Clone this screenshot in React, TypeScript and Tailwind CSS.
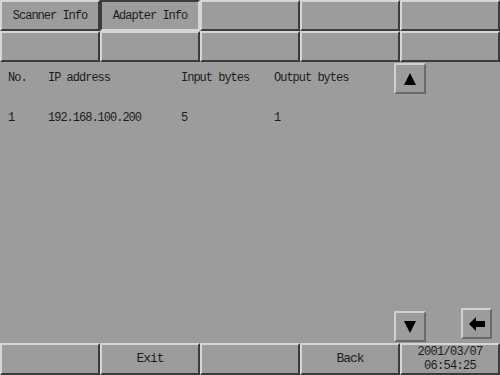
import React from 'react';

const mono = { fontFamily: '"Liberation Mono", "DejaVu Sans Mono", monospace' };

// raised panel: light top/left, dark bottom/right
const raised = 'border-2 border-t-[#d6d6d6] border-l-[#d6d6d6] border-r-[#3c3c3c] border-b-[#3c3c3c]';
// pressed panel (selected tab)
const pressed = 'border-2 border-t-[#3c3c3c] border-l-[#3c3c3c] border-r-[#d6d6d6] border-b-[#d6d6d6]';
const btn = 'border-2 border-t-[#d0d0d0] border-l-[#d0d0d0] border-r-[#6a6a6a] border-b-[#6a6a6a]';

function Cell({ label, selected }: { label?: string; selected?: boolean }) {
  return (
    <div
      className={`flex h-[31px] items-center justify-center text-[12px] tracking-[-1px] text-[#1c1c1c] ${
        selected ? pressed : raised
      }`}
    >
      {label}
    </div>
  );
}

function UpIcon() {
  return (
    <svg width="12" height="12" viewBox="0 0 12 12">
      <path d="M6 0 L12 12 L0 12 Z" fill="#000" />
    </svg>
  );
}

function DownIcon() {
  return (
    <svg width="12" height="12" viewBox="0 0 12 12">
      <path d="M0 0 L12 0 L6 12 Z" fill="#000" />
    </svg>
  );
}

function BackIcon() {
  return (
    <svg width="16" height="14" viewBox="0 0 16 14">
      <path d="M0 7 L7 0 L7 4 L16 4 L16 10 L7 10 L7 14 Z" fill="#000" />
    </svg>
  );
}

export default function App() {
  const headers = ['No.', 'IP address', 'Input bytes', 'Output bytes'];
  const rows = [['1', '192.168.100.200', '5', '1']];

  return (
    <div className="flex h-[375px] w-[500px] flex-col overflow-hidden bg-[#9c9c9c] text-[#1c1c1c]" style={mono}>
      {/* top tab rows */}
      <div className="grid grid-cols-5">
        <Cell label="Scanner Info" />
        <Cell label="Adapter Info" selected />
        <Cell />
        <Cell />
        <Cell />
        <Cell />
        <Cell />
        <Cell />
        <Cell />
        <Cell />
      </div>

      {/* content */}
      <div className="flex flex-1 flex-col">
        <div className="flex pt-px">
          <div className="flex-1 pl-[8px] pt-[7px] text-[12px] tracking-[-1px]">
            <div className="grid grid-cols-[40px_133px_93px_1fr]">
              {headers.map((h) => (
                <div key={h} className="h-[16px] leading-[16px]">
                  {h}
                </div>
              ))}
            </div>
            {rows.map((r, i) => (
              <div key={i} className="mt-[24px] grid grid-cols-[40px_133px_93px_1fr]">
                {r.map((c, j) => (
                  <div key={j} className="h-[16px] leading-[16px]">
                    {c}
                  </div>
                ))}
              </div>
            ))}
          </div>
          <div className={`mr-[74px] flex h-[31px] w-[32px] items-center justify-center ${btn}`}>
            <UpIcon />
          </div>
        </div>

        <div className="mt-auto flex items-end pb-px">
          <div className="flex-1" />
          <div className={`flex h-[31px] w-[32px] items-center justify-center ${btn}`}>
            <DownIcon />
          </div>
          <div className={`mb-[3px] ml-[35px] mr-[8px] flex h-[31px] w-[31px] items-center justify-center ${btn}`}>
            <BackIcon />
          </div>
        </div>
      </div>

      {/* bottom row */}
      <div className="grid h-[32px] grid-cols-5">
        <div className={`h-[32px] ${raised}`} />
        <div className={`flex h-[32px] items-center justify-center text-[13px] tracking-[-1px] ${raised}`}>Exit</div>
        <div className={`h-[32px] ${raised}`} />
        <div className={`flex h-[32px] items-center justify-center text-[13px] tracking-[-1px] ${raised}`}>Back</div>
        <div className={`flex h-[32px] flex-col items-center justify-center text-[12px] leading-[14px] tracking-[-0.7px] ${raised}`}>
          <span>2001/03/07</span>
          <span>06:54:25</span>
        </div>
      </div>
    </div>
  );
}
